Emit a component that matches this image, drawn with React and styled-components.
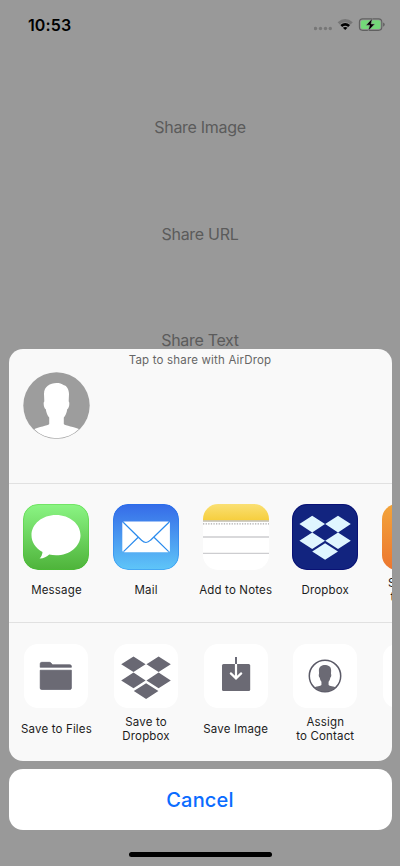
import React from "react";
import styled, { createGlobalStyle } from "styled-components";

const Global = createGlobalStyle`
  * { box-sizing: border-box; }
  html, body { margin: 0; background: #999; }
  body { font-family: Inter, "Liberation Sans", sans-serif; overflow: hidden; }
`;
const Screen = styled.main`
  position: relative;
  width: 400px;
  height: 866px;
  overflow: hidden;
  background: #999;
`;
const StatusBar = styled.header`
  height: 50px;
  display: flex;
  align-items: center;
  justify-content: space-between;
  padding: 0 14px 0 28px;
`;
const Time = styled.time`
  font-size: 16px;
  font-weight: 600;
  line-height: 20px;
  letter-spacing: 0.1px;
  color: #000;
`;
const ShareList = styled.nav`
  display: flex;
  flex-direction: column;
  align-items: center;
  gap: 86.5px;
  padding-top: 67px;
`;
const ShareLink = styled.button`
  border: 0;
  padding: 0;
  background: none;
  font: 400 16px/20px Inter, sans-serif;
  letter-spacing: -0.3px;
  color: #5b5b5b;
`;
const Overlay = styled.section`
  position: absolute;
  inset: 349px 8.5px 0;
  display: flex;
  flex-direction: column;
`;
const Sheet = styled.div`
  height: 411.5px;
  border-radius: 14px;
  background: #f9f9f9;
  overflow: hidden;
`;
const AirDrop = styled.div`
  height: 134.5px;
  border-bottom: 1.5px solid #e1e1e1;
`;
const Caption = styled.p`
  margin: 0;
  padding-top: 4px;
  height: 23px;
  text-align: center;
  font-size: 11.5px;
  line-height: 15px;
  letter-spacing: 0.18px;
  color: #666;
`;
const Avatar = styled.svg`
  display: block;
  width: 67px;
  height: 67px;
  margin-left: 14.5px;
`;
const Row = styled.div`
  display: flex;
  height: ${(p) => p.$height}px;
  padding: ${(p) => p.$top}px 0 0 3.2px;
  border-bottom: ${(p) => (p.$divided ? "1.5px solid #e1e1e1" : "0")};
`;
const Item = styled.div`
  flex: 0 0 89.6px;
  display: flex;
  flex-direction: column;
  align-items: center;
  gap: ${(p) => p.$gap}px;
`;
const AppIcon = styled.svg`
  display: block;
  width: 66px;
  height: 66px;
  flex: none;
  border-radius: 15px;
`;
const ActionTile = styled.div`
  width: 64px;
  height: 64px;
  flex: none;
  border-radius: 14px;
  background: #fff;
  svg { display: block; }
`;
const Label = styled.span`
  height: 28px;
  display: flex;
  align-items: center;
  text-align: center;
  white-space: pre;
  font-size: 11.5px;
  line-height: 14px;
  letter-spacing: 0.16px;
  color: #1c1c1c;
`;
const Cancel = styled.button`
  height: 61px;
  margin-top: 8.5px;
  border: 0;
  border-radius: 14px;
  background: #fff;
  font: 500 20px/24px Inter, sans-serif;
  letter-spacing: 0.2px;
  color: #0a6cff;
`;
const HomeIndicator = styled.div`
  width: 143px;
  height: 5px;
  margin: 22px auto 0;
  border-radius: 3px;
  background: #000;
`;

const StatusIcons = () => (
  <svg width="72" height="18" viewBox="314 16 72 18">
    <g fill="#777">
      {[315.5, 320.5, 325.5, 330.3].map((x) => <circle key={x} cx={x} cy="28.5" r="1.7" />)}
    </g>
    <path d="M337.6 22.2Q345.2 15.8 352.8 22.2L350.6 24.5Q345.2 20.2 339.8 24.5Z" fill="#777" />
    <path d="M340.3 25Q345.2 20.9 350.1 25L348.2 27Q345.2 24.7 342.2 27Z" />
    <path d="M342.9 27.7Q345.2 26.1 347.5 27.7L345.2 30Z" />
    <rect x="359.4" y="18.9" width="22.4" height="11.5" rx="3.3" fill="none" stroke="#606060" strokeWidth="1.1" />
    <rect x="360.8" y="20.2" width="19.6" height="8.9" rx="2" fill="#73d878" />
    <path d="M383 22.5Q384.8 23 384.8 24.6T383 26.8Z" fill="#666" />
    <path d="M372.4 18.3L366 25.2H369.6L368.2 31L374.8 23.9H371.1Z" stroke="#999" strokeWidth=".6" />
  </svg>
);

const Person = ({ fill }) => (
  <path
    fill={fill}
    d="M33.5 11C27 11 21 14.5 21 22L21.3 29.5C20 30.5 20.8 36.5 22.8 37.2C23.3 41 24.5 43.5 26.2 45.4V52C25 54 15 54.7 11 57.3C23 70 45 70 56.5 57.3C52 54.7 42 54 40.8 52V45.4C42.5 43.5 43.8 41 44.2 37.2C46.2 36.5 47 30.5 45.7 29.5L46 22C46 17.5 43.5 13.5 41 13.3C38.5 11.5 36.5 11 33.5 11Z"
  />
);

const MessageIcon = () => (
  <AppIcon viewBox="0 0 66 66">
    <defs><linearGradient id="msg" x2="0" y2="1"><stop stopColor="#8bf584" /><stop offset="1" stopColor="#4eb33a" /></linearGradient></defs>
    <rect width="66" height="66" rx="15" fill="url(#msg)" />
    <rect x=".5" y=".5" width="65" height="65" rx="14.5" fill="none" stroke="#45c72d" strokeOpacity=".35" />
    <path fill="#fff" d="M33 11C19.3 11 8.5 20 8.5 31.2C8.5 38 12.5 44.2 19.5 48C19.3 50.8 18.2 52.8 16.6 54.6C20.8 54.5 24 52.8 26.2 50.6C28.4 51.1 30.7 51.3 33 51.3C46.7 51.3 57.5 42.3 57.5 31.2S46.7 11 33 11Z" />
  </AppIcon>
);
const MailIcon = () => (
  <AppIcon viewBox="0 0 66 66">
    <defs><linearGradient id="mail" x2="0" y2="1"><stop stopColor="#356be8" /><stop offset="1" stopColor="#5fc6f8" /></linearGradient></defs>
    <rect width="66" height="66" rx="15" fill="url(#mail)" />
    <rect x=".5" y=".5" width="65" height="65" rx="14.5" fill="none" stroke="#1674ed" strokeOpacity=".35" />
    <rect x="9.3" y="17.5" width="47.6" height="30.7" rx="2" fill="#fff" />
    <path d="M10.2 18.2L28.5 36.2Q33 40.8 37.5 36.2L56 18.2M10.5 47.6L25.2 33.2M55.7 47.6L41 33.2" fill="none" stroke="#2b8bed" strokeWidth="1.2" />
  </AppIcon>
);
const NotesIcon = () => (
  <AppIcon viewBox="0 0 66 66">
    <defs><linearGradient id="notes" x2="0" y2="1"><stop stopColor="#fae074" /><stop offset="1" stopColor="#f6ce3d" /></linearGradient></defs>
    <rect width="66" height="66" fill="#fff" />
    <rect width="66" height="16.5" fill="url(#notes)" />
    <rect y="16.3" width="66" height="1.4" fill="#bcb8a8" />
    <path d="M0 19.8H66" stroke="#aaa" strokeWidth="1.3" strokeDasharray="1.3 1.3" />
    <path d="M0 33H66M0 49.4H66" stroke="#cdcdd0" strokeWidth="1.4" />
  </AppIcon>
);
const DropboxIcon = () => (
  <AppIcon viewBox="0 0 66 66">
    <rect width="66" height="66" fill="#12247f" />
    <rect x=".5" y=".5" width="65" height="65" rx="14.5" fill="none" stroke="#05066e" strokeOpacity=".6" />
    <path fill="#dff6ff" d="M20.2 11.8L33 20.1L20.2 28.4L7.4 20.1ZM46 11.8L58.8 20.1L46 28.4L33.2 20.1ZM20.2 28.4L33 36.7L20.2 45L7.4 36.7ZM46 28.4L58.8 36.7L46 45L33.2 36.7ZM33.1 39.2L46 47.5L33.1 55.8L20.2 47.5Z" />
  </AppIcon>
);
const OrangeIcon = () => (
  <AppIcon viewBox="0 0 66 66">
    <defs><linearGradient id="orange" x2="0" y2="1"><stop stopColor="#f3a43a" /><stop offset="1" stopColor="#ec762f" /></linearGradient></defs>
    <rect width="66" height="66" fill="url(#orange)" />
  </AppIcon>
);

const FolderGlyph = () => (
  <svg width="64" height="64" fill="#6b6a74" stroke="#50505e" strokeWidth=".6">
    <path d="M16.2 23.3V19.8Q16.2 18.3 17.7 18.3H25.5Q26.5 18.3 27.2 19.2L28 20.2Q28.4 20.7 29.2 20.7H45.8Q47.4 20.7 47.4 22.2V23.3Z" />
    <path d="M16.2 26.2H47.4V44Q47.4 45.5 45.9 45.5H17.7Q16.2 45.5 16.2 44Z" />
  </svg>
);
const DropboxGlyph = () => (
  <svg width="64" height="64">
    <path fill="#696873" d="M19.5 12.5L31.6 20.3L19.5 28.1L7.2 20.3ZM44.6 12.5L56.8 20.3L44.6 28.1L32.5 20.3ZM19.5 28.6L31.6 36.4L19.5 44.2L7.2 36.4ZM44.6 28.6L56.8 36.4L44.6 44.2L32.5 36.4ZM32.1 39.2L44.4 47L32.1 55L19.8 47Z" />
  </svg>
);
const SaveGlyph = () => (
  <svg width="64" height="64">
    <rect x="18" y="20" width="28.2" height="27" rx="1.5" fill="#6b6a74" />
    <path d="M32 19.8V34.2M26.8 29.4L32 34.4L37.2 29.4" fill="none" stroke="#fff" strokeWidth="2.2" strokeLinecap="round" />
    <path d="M32 13V20" stroke="#50505e" strokeWidth="1.7" />
  </svg>
);
const ContactGlyph = () => (
  <svg width="64" height="64">
    <clipPath id="contact"><circle cx="32" cy="32" r="15.6" /></clipPath>
    <circle cx="32" cy="32" r="15.7" fill="#fff" stroke="#5b5a67" strokeWidth="1.5" />
    <g clipPath="url(#contact)"><g transform="translate(15.6 15.5) scale(.49)"><Person fill="#6b6a74" /></g></g>
  </svg>
);

const apps = [
  ["Message", MessageIcon], ["Mail", MailIcon], ["Add to Notes", NotesIcon],
  ["Dropbox", DropboxIcon], ["Save PDF\nto Books", OrangeIcon],
];
const actions = [
  ["Save to Files", FolderGlyph], ["Save to\nDropbox", DropboxGlyph],
  ["Save Image", SaveGlyph], ["Assign\nto Contact", ContactGlyph], ["", null],
];

export default function App() {
  return (
    <Screen>
      <Global />
      <StatusBar><Time>10:53</Time><StatusIcons /></StatusBar>
      <ShareList>
        <ShareLink>Share Image</ShareLink>
        <ShareLink>Share URL</ShareLink>
        <ShareLink>Share Text</ShareLink>
      </ShareList>
      <Overlay>
        <Sheet>
          <AirDrop>
            <Caption>Tap to share with AirDrop</Caption>
            <Avatar viewBox="0 0 67 67">
              <clipPath id="avatar"><circle cx="33.5" cy="33.5" r="32.7" /></clipPath>
              <circle cx="33.5" cy="33.5" r="33.2" fill="#9d9d9d" />
              <g clipPath="url(#avatar)"><Person fill="#fff" /></g>
            </Avatar>
          </AirDrop>
          <Row $height={139} $top={20.5} $divided>
            {apps.map(([label, Icon]) => (
              <Item key={label} $gap={6}><Icon /><Label>{label}</Label></Item>
            ))}
          </Row>
          <Row $height={138} $top={21.5}>
            {actions.map(([label, Glyph]) => (
              <Item key={label} $gap={7}>
                <ActionTile>{Glyph && <Glyph />}</ActionTile>
                <Label>{label}</Label>
              </Item>
            ))}
          </Row>
        </Sheet>
        <Cancel>Cancel</Cancel>
        <HomeIndicator />
      </Overlay>
    </Screen>
  );
}
